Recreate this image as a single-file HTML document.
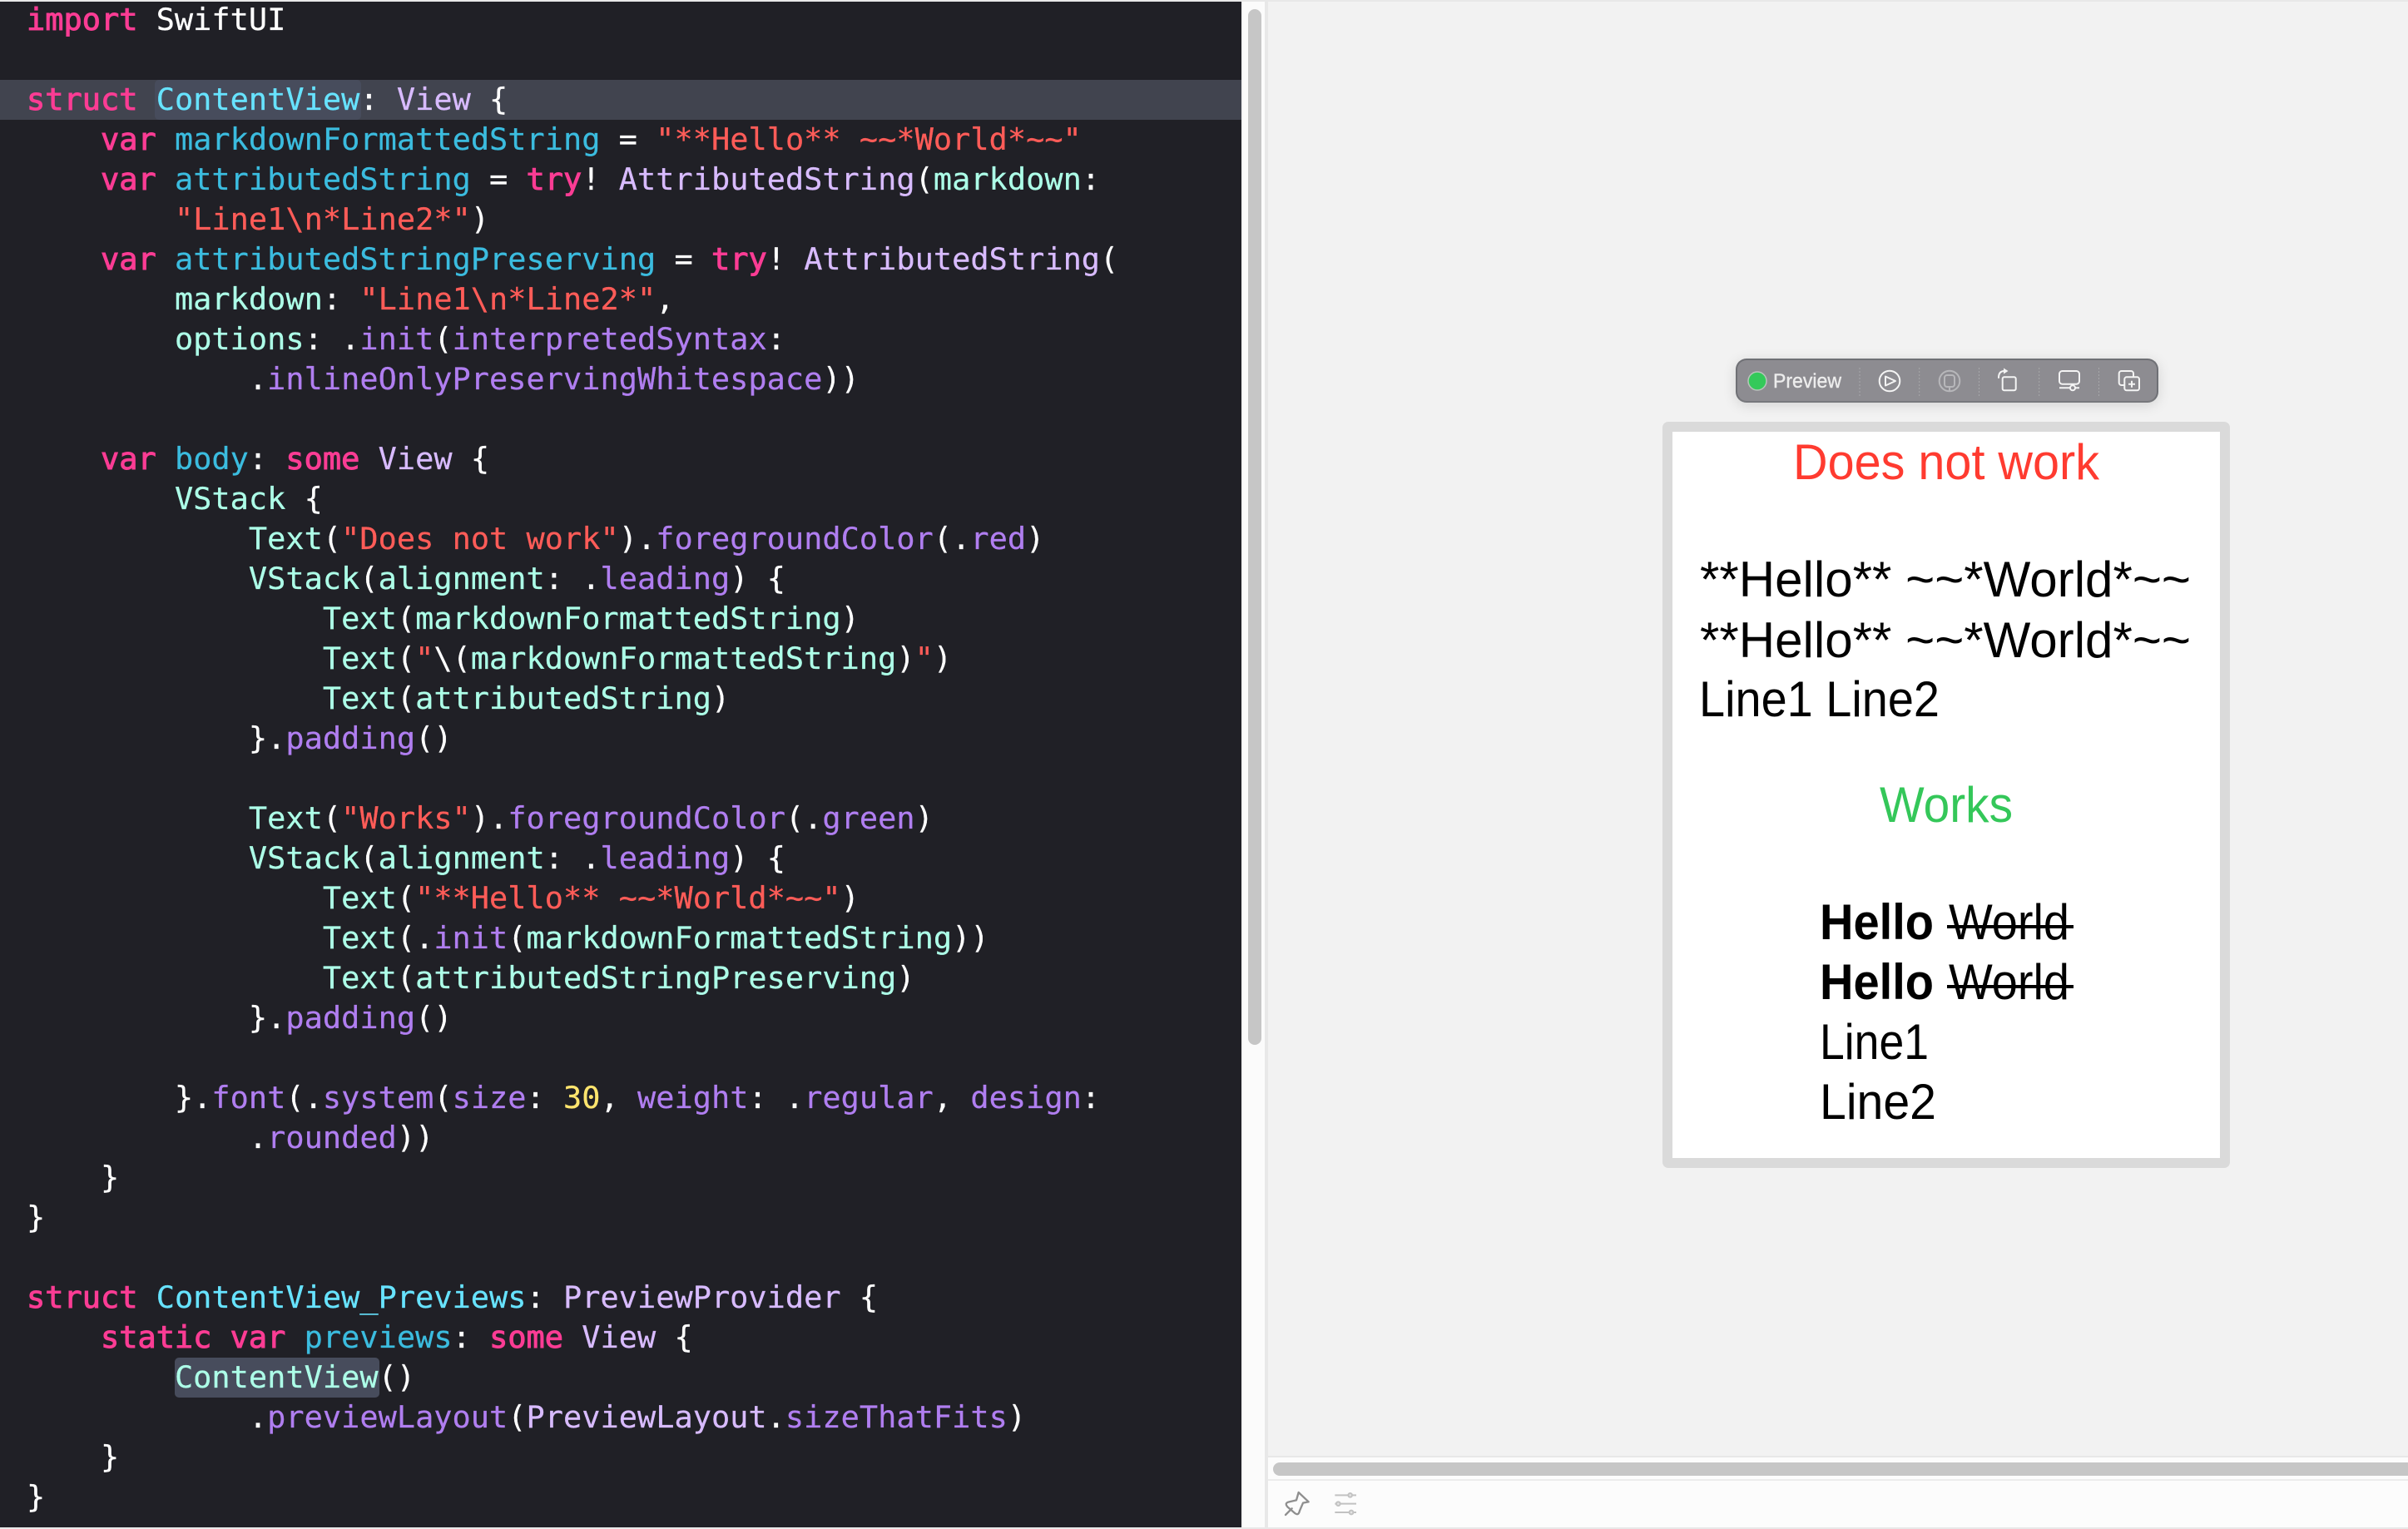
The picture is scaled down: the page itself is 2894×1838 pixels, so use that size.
<!DOCTYPE html>
<html><head><meta charset="utf-8"><style>
html,body{margin:0;padding:0;width:2894px;height:1838px;overflow:hidden;background:#f2f2f2}
div,pre,svg{position:absolute}
#code{left:0;top:2px;width:1492px;height:1834px;background:#202026;overflow:hidden}
#cur{left:0;top:94px;width:1492px;height:48px;background:#41444f}
.hl{background:#474c5c;border-radius:5px;height:48px}
pre{margin:0;left:32px;top:-2px;font:36.87px/48px "DejaVu Sans Mono","Liberation Mono",monospace;letter-spacing:.05px;color:#fff;white-space:pre;-webkit-text-stroke:.25px currentColor}
.k{color:#fb3c94;-webkit-text-stroke:1px #fb3c94}.t{color:#d8bbff}.d{color:#67e3ff}.v{color:#3bbcdf}.s{color:#ff5c58}.f{color:#b07ef0}.p{color:#adffe8}.n{color:#ffe56e}
</style></head><body>
<div style="left:0;top:0;width:2894px;height:2px;background:#e8e8e8"></div>
<div style="left:0;top:1836px;width:2894px;height:2px;background:#e8e8e8"></div>
<div id="code">
<div id="cur"></div>
<div class="hl" style="left:186px;top:94px;width:248px"></div>
<div class="hl" style="left:210px;top:1630px;width:246px"></div>
<pre><span class="k">import</span> SwiftUI

<span class="k">struct</span> <span class="d">ContentView</span>: <span class="t">View</span> {
    <span class="k">var</span> <span class="v">markdownFormattedString</span> = <span class="s">"**Hello** ~~*World*~~"</span>
    <span class="k">var</span> <span class="v">attributedString</span> = <span class="k">try</span>! <span class="t">AttributedString</span>(<span class="p">markdown</span>:
        <span class="s">"Line1\n*Line2*"</span>)
    <span class="k">var</span> <span class="v">attributedStringPreserving</span> = <span class="k">try</span>! <span class="t">AttributedString</span>(
        <span class="p">markdown</span>: <span class="s">"Line1\n*Line2*"</span>,
        <span class="p">options</span>: .<span class="f">init</span>(<span class="f">interpretedSyntax</span>:
            .<span class="f">inlineOnlyPreservingWhitespace</span>))

    <span class="k">var</span> <span class="v">body</span>: <span class="k">some</span> <span class="t">View</span> {
        <span class="p">VStack</span> {
            <span class="p">Text</span>(<span class="s">"Does not work"</span>).<span class="f">foregroundColor</span>(.<span class="f">red</span>)
            <span class="p">VStack</span>(<span class="p">alignment</span>: .<span class="f">leading</span>) {
                <span class="p">Text</span>(<span class="p">markdownFormattedString</span>)
                <span class="p">Text</span>(<span class="s">"</span>\(<span class="p">markdownFormattedString</span>)<span class="s">"</span>)
                <span class="p">Text</span>(<span class="p">attributedString</span>)
            }.<span class="f">padding</span>()

            <span class="p">Text</span>(<span class="s">"Works"</span>).<span class="f">foregroundColor</span>(.<span class="f">green</span>)
            <span class="p">VStack</span>(<span class="p">alignment</span>: .<span class="f">leading</span>) {
                <span class="p">Text</span>(<span class="s">"**Hello** ~~*World*~~"</span>)
                <span class="p">Text</span>(.<span class="f">init</span>(<span class="p">markdownFormattedString</span>))
                <span class="p">Text</span>(<span class="p">attributedStringPreserving</span>)
            }.<span class="f">padding</span>()

        }.<span class="f">font</span>(.<span class="f">system</span>(<span class="f">size</span>: <span class="n">30</span>, <span class="f">weight</span>: .<span class="f">regular</span>, <span class="f">design</span>:
            .<span class="f">rounded</span>))
    }
}

<span class="k">struct</span> <span class="d">ContentView_Previews</span>: <span class="t">PreviewProvider</span> {
    <span class="k">static</span> <span class="k">var</span> <span class="v">previews</span>: <span class="k">some</span> <span class="t">View</span> {
        <span class="p">ContentView</span>()
            .<span class="f">previewLayout</span>(<span class="t">PreviewLayout</span>.<span class="f">sizeThatFits</span>)
    }
}</pre>
</div>

<!-- vertical scrollbar -->
<div style="left:1492px;top:2px;width:28px;height:1834px;background:#fbfbfb;border-left:2px solid #f2f2f2;box-sizing:border-box"></div>
<div style="left:1500px;top:11px;width:16px;height:1245px;background:#c6c6c6;border-radius:8px"></div>
<div style="left:1520px;top:2px;width:4px;height:1834px;background:#e8e8e8"></div>

<!-- bottom bars -->
<div style="left:1524px;top:1750px;width:1370px;height:2px;background:#e8e8e8"></div>
<div style="left:1524px;top:1752px;width:1370px;height:26px;background:#fcfcfc"></div>
<div style="left:1530px;top:1758px;width:1364px;height:16px;background:#c6c6c6;border-radius:8px 0 0 8px"></div>
<div style="left:1524px;top:1778px;width:1370px;height:2px;background:#ececec"></div>
<div style="left:1524px;top:1780px;width:1370px;height:56px;background:#fcfcfc"></div>

<svg style="left:1540px;top:1790px" width="110" height="40" viewBox="0 0 330 120" fill="none">
<path d="M62 12L98 46L78 50L66 78Q62 96 50 88L22 64Q10 50 28 46L54 40Z" stroke="#8f8f8f" stroke-width="7" stroke-linejoin="round"/>
<path d="M15 93L38 70" stroke="#8f8f8f" stroke-width="7" stroke-linecap="round"/>
<g stroke="#c2c2c2" stroke-width="6"><path d="M193 22H270M193 53H270M193 84H270"/>
<g fill="#e4e4e4"><circle cx="248" cy="22" r="7"/><circle cx="205" cy="53" r="7"/><circle cx="252" cy="84" r="7"/></g></g>
</svg>

<!-- preview card -->
<div style="left:1998px;top:507px;width:682px;height:897px;background:#dadada;border-radius:7px"></div>
<div style="left:2010px;top:519px;width:658px;height:873px;background:#fff"></div>
<svg style="left:0;top:0" width="2894" height="1838" font-family="'Liberation Sans',sans-serif" font-size="60" fill="#000">
<text x="2155" y="576" fill="#ff3b30" textLength="368" lengthAdjust="spacingAndGlyphs">Does not work</text>
<text x="2043" y="717" textLength="590" lengthAdjust="spacingAndGlyphs">**Hello** ~~*World*~~</text>
<text x="2043" y="790" textLength="590" lengthAdjust="spacingAndGlyphs">**Hello** ~~*World*~~</text>
<text x="2042" y="861" textLength="289" lengthAdjust="spacingAndGlyphs">Line1 Line2</text>
<text x="2259" y="988" fill="#34c759" textLength="160" lengthAdjust="spacingAndGlyphs">Works</text>
<text x="2187" y="1129" font-weight="700" textLength="137" lengthAdjust="spacingAndGlyphs">Hello</text>
<text x="2342" y="1129" textLength="145" lengthAdjust="spacingAndGlyphs">World</text>
<rect x="2340" y="1112" width="152" height="4"/>
<text x="2187" y="1201" font-weight="700" textLength="137" lengthAdjust="spacingAndGlyphs">Hello</text>
<text x="2342" y="1201" textLength="145" lengthAdjust="spacingAndGlyphs">World</text>
<rect x="2340" y="1184" width="152" height="4"/>
<text x="2187" y="1273" textLength="131" lengthAdjust="spacingAndGlyphs">Line1</text>
<text x="2187" y="1345" textLength="140" lengthAdjust="spacingAndGlyphs">Line2</text>
</svg>

<!-- toolbar -->
<div style="left:2086px;top:431px;width:508px;height:53px;box-sizing:border-box;background:#8d8c91;border:2px solid #6f7075;border-bottom-color:#77787c;border-radius:13px;box-shadow:0 3px 16px rgba(0,0,0,.13)"></div>
<svg style="left:0;top:0" width="2894" height="1838" fill="none" stroke="#f4f4f4" stroke-width="2">
<circle cx="2112" cy="458" r="11" fill="#34c95a" stroke="#b9c4bc" stroke-width="1.5"/>
<text x="2131" y="466" font-family="'Liberation Sans',sans-serif" font-size="24" fill="#ececec" stroke="#ececec" stroke-width=".4" textLength="82" lengthAdjust="spacingAndGlyphs">Preview</text>
<g stroke="#a8a8aa" stroke-width="1" stroke-dasharray="2 2">
<path d="M2235 442V476M2306.7 442V476M2378.5 442V476M2450.7 442V476M2522.5 442V476"/></g>
<circle cx="2271" cy="458" r="12.3"/>
<path d="M2266 452.5V463.5L2278 458Z" stroke-linejoin="round"/>
<g stroke="#b7b7ba"><circle cx="2343" cy="458" r="12.3"/>
<rect x="2337" y="451" width="12" height="14" rx="3"/><path d="M2343 465V470"/></g>
<rect x="2406.7" y="453.3" width="16" height="16" rx="2"/>
<path d="M2402 454Q2402 446 2409 446" stroke-linecap="round"/>
<path d="M2408 442.5L2413.5 446L2408 449.5Z" fill="#f4f4f4" stroke="none"/>
<rect x="2475" y="446" width="24" height="15.7" rx="3.5"/>
<path d="M2475 466.3H2487.5M2494.5 466.3H2499"/>
<circle cx="2491" cy="466.3" r="3"/>
<rect x="2546.7" y="446" width="17.3" height="17" rx="3"/>
<rect x="2553.3" y="453.3" width="17.7" height="16" rx="2.5" fill="#8d8c91"/>
<path d="M2562 457.7V465.7M2558 461.7H2566"/>
</svg>
</body></html>
